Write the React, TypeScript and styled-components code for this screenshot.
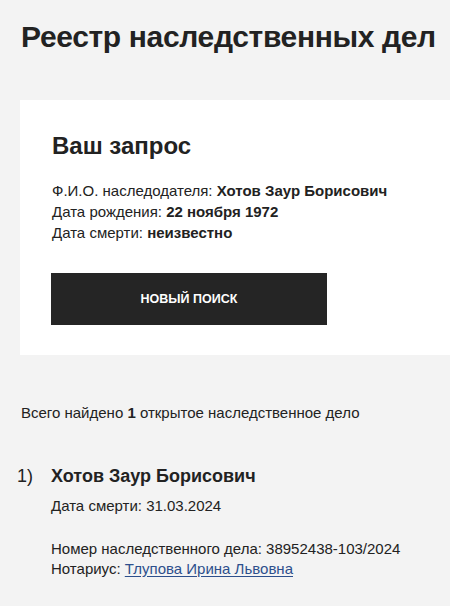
import styled, { createGlobalStyle } from 'styled-components';

const GlobalStyle = createGlobalStyle`
	html, body {
		margin: 0;
		background: #f3f3f3;
	}
	body {
		font-family: 'Liberation Sans', Arial, sans-serif;
		color: #222222;
	}
`;

const Page = styled.main`
	padding: 0 0 40px 20px;
	overflow: hidden;
`;

const Title = styled.h1`
	margin: 19px 0 0 1px;
	font-size: 30px;
	line-height: 36px;
	font-weight: 700;
	letter-spacing: -0.35px;
`;

const Card = styled.section`
	margin-top: 45px;
	background: #ffffff;
	padding: 31px 32px 30px 31px;
`;

const CardTitle = styled.h2`
	margin: 0 0 0 1px;
	font-size: 24px;
	line-height: 29px;
	font-weight: 700;
`;

const Fields = styled.div`
	margin: 20px 0 0 1px;
	font-size: 15px;
	line-height: 21px;
`;

const Field = styled.div`
	b {
		font-weight: 700;
	}
`;

const Button = styled.button`
	display: flex;
	align-items: center;
	justify-content: center;
	margin-top: 30px;
	width: 276px;
	height: 52px;
	border: 0;
	background: #252525;
	color: #ffffff;
	font-family: inherit;
	font-size: 12.5px;
	font-weight: 700;
	text-transform: uppercase;
	cursor: pointer;
`;

const Summary = styled.p`
	margin: 47px 0 0 1px;
	font-size: 15px;
	line-height: 21px;
`;

const Results = styled.ol`
	list-style: none;
	margin: 41px 0 0;
	padding: 0;
`;

const Item = styled.li`
	display: grid;
	grid-template-columns: 34px 1fr;
	margin-left: -3px;
`;

const Num = styled.span`
	font-size: 18px;
	line-height: 24px;
`;

const Name = styled.div`
	font-size: 18px;
	line-height: 24px;
	font-weight: 700;
`;

const Line = styled.div<{ $gap?: number }>`
	margin-top: ${({ $gap }) => $gap ?? 0}px;
	font-size: 15px;
	line-height: 20px;
`;

const Link = styled.a`
	color: #2d4f8c;
	text-decoration: underline;
	text-underline-offset: 2px;
`;

export default function App() {
	return (
		<>
			<GlobalStyle />
			<Page>
				<Title>Реестр наследственных дел</Title>

				<Card>
					<CardTitle>Ваш запрос</CardTitle>
					<Fields>
						<Field>
							Ф.И.О. наследодателя: <b>Хотов Заур Борисович</b>
						</Field>
						<Field>
							Дата рождения: <b>22 ноября 1972</b>
						</Field>
						<Field>
							Дата смерти: <b>неизвестно</b>
						</Field>
					</Fields>
					<Button>Новый поиск</Button>
				</Card>

				<Summary>
					Всего найдено <b>1</b> открытое наследственное дело
				</Summary>

				<Results>
					<Item>
						<Num>1)</Num>
						<div>
							<Name>Хотов Заур Борисович</Name>
							<Line $gap={8}>Дата смерти: 31.03.2024</Line>
							<Line $gap={23}>Номер наследственного дела: 38952438-103/2024</Line>
							<Line>
								Нотариус: <Link href="#">Тлупова Ирина Львовна</Link>
							</Line>
						</div>
					</Item>
				</Results>
			</Page>
		</>
	);
}
